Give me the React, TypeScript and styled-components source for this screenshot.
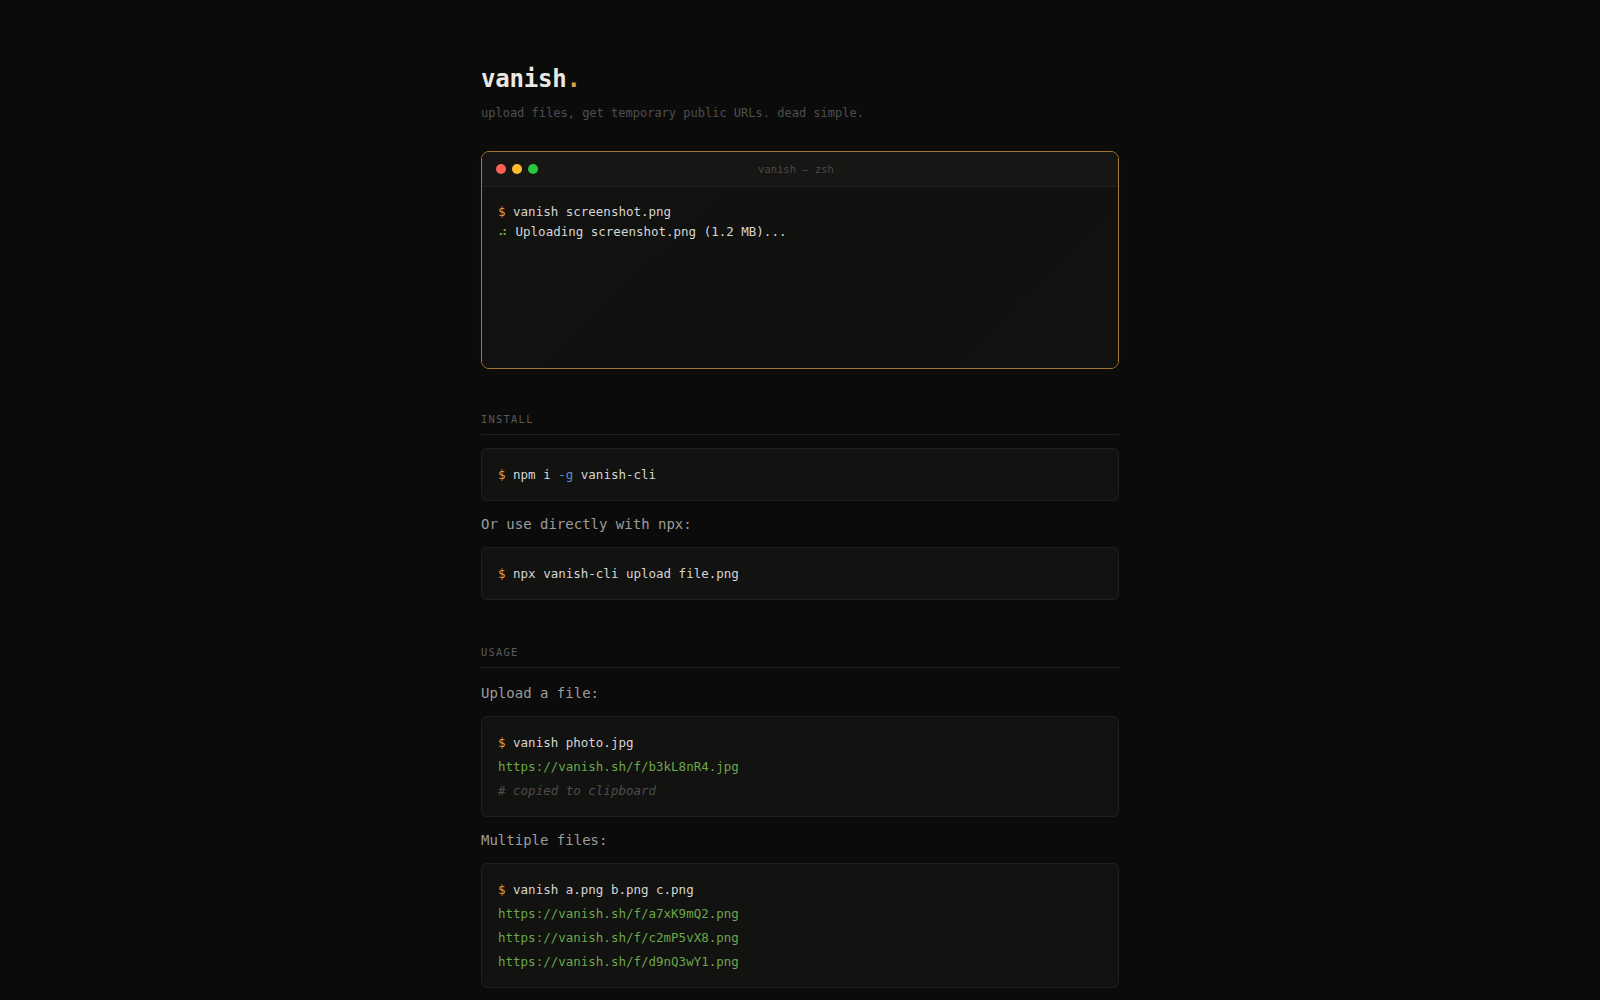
import React from "react";
import styled, { createGlobalStyle } from "styled-components";

const Global = createGlobalStyle`
  html, body { margin: 0; padding: 0; background: #0b0b0b; }
  body { font-family: "DejaVu Sans Mono", "Liberation Mono", monospace; color: #d4d4d4; }
  * { box-sizing: border-box; }
`;

const Page = styled.main`
  width: 638px;
  margin: 0 auto;
  padding: 64px 0 40px;
`;

const Title = styled.h1`
  margin: 0;
  font-size: 24px;
  line-height: 30px;
  font-weight: 700;
  color: #ebe8e2;
  letter-spacing: -0.2px;
`;

const Dot = styled.span`
  color: #d9a441;
`;

const Subtitle = styled.p`
  margin: 10px 0 0;
  font-size: 12px;
  line-height: 18px;
  color: #4f4f4f;
`;

const Terminal = styled.div`
  margin-top: 29px;
  border: 1px solid #a27a2e;
  border-radius: 8px;
  overflow: hidden;
  background: #111110;
  box-shadow: 0 0 24px rgba(217, 164, 65, 0.04);
`;

const TermHeader = styled.div`
  height: 35px;
  display: grid;
  grid-template-columns: 1fr auto 1fr;
  align-items: center;
  padding: 0 14px;
  background: #161615;
  border-bottom: 1px solid #222120;
`;

const Lights = styled.div`
  display: flex;
  gap: 6px;
`;

const Light = styled.span<{ $c: string }>`
  width: 10px;
  height: 10px;
  border-radius: 50%;
  background: ${(p) => p.$c};
`;

const TermTitle = styled.span`
  font-size: 10.5px;
  color: #4a4a4a;
  margin-left: -8px;
`;

const TermBody = styled.div`
  min-height: 181px;
  padding: 15px 16px;
  font-size: 12.5px;
  line-height: 19.5px;
  background: linear-gradient(135deg, #121211 0%, #10100f 60%, #121211 100%);
`;

const Line = styled.div`
  white-space: pre;
  color: #d6d6d4;
`;

const Prompt = styled.span`
  color: #d9a441;
`;

const Spinner = styled.span`
  color: #6db04a;
  font-family: "DejaVu Sans Mono", monospace;
`;

const Section = styled.section<{ $gap?: number }>`
  margin-top: ${(p) => p.$gap ?? 42}px;
`;

const Label = styled.h2`
  margin: 0;
  padding-bottom: 7px;
  border-bottom: 1px solid #1f1f1f;
  font-size: 10.5px;
  line-height: 16px;
  font-weight: 400;
  letter-spacing: 1.2px;
  color: #5a5a5a;
`;

const Text = styled.p<{ $top?: number }>`
  margin: ${(p) => p.$top ?? 12}px 0 12px;
  font-size: 14px;
  line-height: 22px;
  color: #9c9c9a;
`;

const CodeBox = styled.div<{ $top?: number }>`
  margin-top: ${(p) => p.$top ?? 0}px;
  padding: 14px 16px 13px;
  background: #121211;
  border: 1px solid #1f1f1e;
  border-radius: 6px;
  font-size: 12.5px;
  line-height: 24px;
`;

const Flag = styled.span`
  color: #5a8fd0;
`;

const Url = styled.div`
  color: #6aa84a;
  white-space: pre;
`;

const Comment = styled.div`
  color: #4d4d4d;
  font-style: italic;
  white-space: pre;
`;

export default function App() {
  return (
    <>
      <Global />
      <Page>
        <Title>
          vanish<Dot>.</Dot>
        </Title>
        <Subtitle>upload files, get temporary public URLs. dead simple.</Subtitle>

        <Terminal>
          <TermHeader>
            <Lights>
              <Light $c="#ff5f57" />
              <Light $c="#febc2e" />
              <Light $c="#28c840" />
            </Lights>
            <TermTitle>vanish — zsh</TermTitle>
            <span />
          </TermHeader>
          <TermBody>
            <Line>
              <Prompt>$</Prompt> vanish screenshot.png
            </Line>
            <Line>
              <Spinner>⠴</Spinner> Uploading screenshot.png (1.2 MB)...
            </Line>
          </TermBody>
        </Terminal>

        <Section>
          <Label>INSTALL</Label>
          <CodeBox $top={13}>
            <Line>
              <Prompt>$</Prompt> npm i <Flag>-g</Flag> vanish-cli
            </Line>
          </CodeBox>
          <Text>Or use directly with npx:</Text>
          <CodeBox>
            <Line>
              <Prompt>$</Prompt> npx vanish-cli upload file.png
            </Line>
          </CodeBox>
        </Section>

        <Section $gap={44}>
          <Label>USAGE</Label>
          <Text $top={14}>Upload a file:</Text>
          <CodeBox>
            <Line>
              <Prompt>$</Prompt> vanish photo.jpg
            </Line>
            <Url>https://vanish.sh/f/b3kL8nR4.jpg</Url>
            <Comment># copied to clipboard</Comment>
          </CodeBox>
          <Text>Multiple files:</Text>
          <CodeBox>
            <Line>
              <Prompt>$</Prompt> vanish a.png b.png c.png
            </Line>
            <Url>https://vanish.sh/f/a7xK9mQ2.png</Url>
            <Url>https://vanish.sh/f/c2mP5vX8.png</Url>
            <Url>https://vanish.sh/f/d9nQ3wY1.png</Url>
          </CodeBox>
        </Section>
      </Page>
    </>
  );
}
